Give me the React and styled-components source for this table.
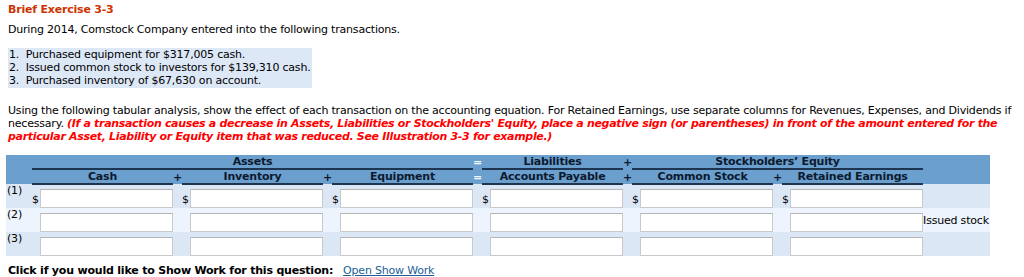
import styled, { createGlobalStyle } from 'styled-components';

const GlobalStyle = createGlobalStyle`
	body {
		margin: 0;
		background: #fff;
		font-family: Verdana, 'DejaVu Sans', sans-serif;
		font-size: 11px;
		line-height: 13px;
		letter-spacing: -0.2px;
		color: #000;
	}
`;

const Page = styled.div`
	width: 1012px;
	padding: 3px 0 0 8px;
`;

const Title = styled.h3`
	margin: 0;
	font-size: 11px;
	line-height: 14px;
	font-weight: bold;
	color: #cc3300;
`;

const Intro = styled.p`
	margin: 6px 0 0;
`;

const TxList = styled.ol`
	margin: 12px 0 0;
	padding: 0 0 1px 0;
	width: 304px;
	list-style: none;
	white-space: nowrap;
	background: #dde8f7;

	& > li {
		padding-left: 1px;
	}
`;

const Instructions = styled.p`
	margin: 16px 0 0;
	width: 1004px;
`;

const Warn = styled.em`
	color: #ff0000;
	font-weight: bold;
	letter-spacing: -0.32px;
`;

const Grid = styled.table`
	margin: 12px 0 0 -2px;
	border-collapse: collapse;
	border-spacing: 0;
	table-layout: fixed;
	width: 984px;

	td,
	th {
		padding: 0;
	}
`;

const HeadRow = styled.tr`
	background: #6b9fce;
	height: ${(p) => p.$h}px;
`;

const HeadCell = styled.th`
	font-weight: bold;
	text-align: center;
	vertical-align: bottom;
	white-space: nowrap;
	color: #0d1a2e;
	border-bottom: ${(p) => (p.$line ? '2px solid #1d3550' : 'none')};
	line-height: 13px;
`;

const Op = styled.th`
	font-weight: bold;
	text-align: center;
	vertical-align: bottom;
	color: ${(p) => (p.$light ? '#f4f8fc' : '#0d1a2e')};
	line-height: 13px;
`;

const BodyRow = styled.tr`
	height: 24px;
	background: ${(p) => (p.$alt ? '#edf4fd' : '#dce7f6')};
`;

const Label = styled.td`
	vertical-align: top;
	padding-left: 1px !important;
`;

const Dollar = styled.td`
	vertical-align: bottom;
	padding-bottom: 2px !important;
`;

const Cell = styled.td`
	vertical-align: bottom;
`;

const Note = styled.td`
	vertical-align: middle;
	white-space: nowrap;
`;

const Amount = styled.input`
	display: block;
	box-sizing: border-box;
	width: 133px;
	height: 19px;
	margin: 0;
	border: 1px solid #c9c9c9;
	border-top-color: #b5b5b5;
	background: #fff;
	font: inherit;
	padding: 0 3px;
`;

const Footer = styled.div`
	margin-top: 8px;
	display: flex;
	gap: 10px;
`;

const Strong = styled.span`
	font-weight: bold;
`;

const WorkLink = styled.a`
	color: #225e96;
	text-decoration: underline;
`;

const COLUMNS = ['Cash', 'Inventory', 'Equipment', 'Accounts Payable', 'Common Stock', 'Retained Earnings'];
const OPS = ['+', '+', '=', '+', '+'];

const rows = [
	{ id: '(1)', dollars: true, note: '' },
	{ id: '(2)', dollars: false, note: 'Issued stock' },
	{ id: '(3)', dollars: false, note: '' },
];

const App = () => {
	return (
		<>
			<GlobalStyle />
			<Page>
				<Title>Brief Exercise 3-3</Title>
				<Intro>During 2014, Comstock Company entered into the following transactions.</Intro>
				<TxList>
					<li>1.&nbsp; Purchased equipment for $317,005 cash.</li>
					<li>2.&nbsp; Issued common stock to investors for $139,310 cash.</li>
					<li>3.&nbsp; Purchased inventory of $67,630 on account.</li>
				</TxList>
				<Instructions>
					Using the following tabular analysis, show the effect of each transaction on the accounting equation. For
					Retained Earnings, use separate columns for Revenues, Expenses, and Dividends if necessary.{' '}
					<Warn>
						(If a transaction causes a decrease in Assets, Liabilities or Stockholders' Equity, place a negative sign
						(or parentheses) in front of the amount entered for the particular Asset, Liability or Equity item that
						was reduced. See Illustration 3-3 for example.)
					</Warn>
				</Instructions>

				<Grid>
					<colgroup>
						<col style={{ width: 26 }} />
						{COLUMNS.map((c, i) => (
							<Cols key={c} last={i === COLUMNS.length - 1} />
						))}
						<col style={{ width: 67 }} />
					</colgroup>
					<thead>
						<HeadRow $h={13}>
							<HeadCell />
							<HeadCell colSpan={8} $line>
								Assets
							</HeadCell>
							<Op $light>=</Op>
							<HeadCell colSpan={2} $line>
								Liabilities
							</HeadCell>
							<Op>+</Op>
							<HeadCell colSpan={5} $line>
								Stockholders’ Equity
							</HeadCell>
							<HeadCell />
						</HeadRow>
						<HeadRow $h={15}>
							<HeadCell />
							{COLUMNS.map((c, i) => (
								<Head key={c} title={c} op={OPS[i]} />
							))}
							<HeadCell />
						</HeadRow>
					</thead>
					<tbody>
						{rows.map((r, ri) => (
							<BodyRow key={r.id} $alt={ri === 1}>
								<Label>{r.id}</Label>
								{COLUMNS.map((c, i) => (
									<Entry key={c} dollar={r.dollars} op={OPS[i]} />
								))}
								<Note>{r.note}</Note>
							</BodyRow>
						))}
					</tbody>
				</Grid>

				<Footer>
					<Strong>Click if you would like to Show Work for this question:</Strong>
					<WorkLink href='#'>Open Show Work</WorkLink>
				</Footer>
			</Page>
		</>
	);
};

const Cols = ({ last }) => (
	<>
		<col style={{ width: 8 }} />
		<col style={{ width: 133 }} />
		{!last && <col style={{ width: 9 }} />}
	</>
);

const Head = ({ title, op }) => (
	<>
		<HeadCell colSpan={2} $line>
			{title}
		</HeadCell>
		{op && <Op $light={op === '='}>{op}</Op>}
	</>
);

const Entry = ({ dollar, op }) => (
	<>
		<Dollar>{dollar ? '$' : ''}</Dollar>
		<Cell>
			<Amount type='text' />
		</Cell>
		{op && <Cell />}
	</>
);

export default App;
